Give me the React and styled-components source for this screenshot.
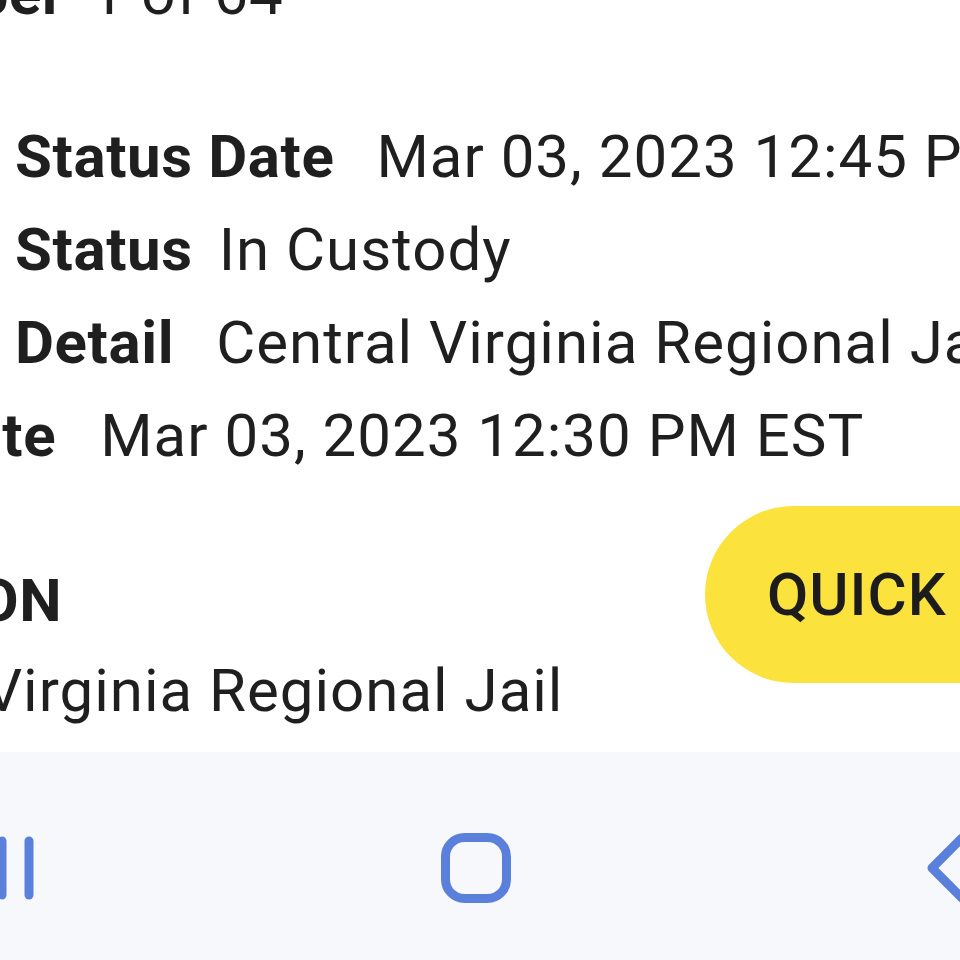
import React from "react";
import styled, { createGlobalStyle } from "styled-components";

const Global = createGlobalStyle`
  html, body { margin: 0; padding: 0; background: #ffffff; overflow: hidden; }
  body { width: 960px; height: 960px; }
  * { box-sizing: border-box; }
`;

const Screen = styled.div`
  width: 960px;
  height: 960px;
  display: flex;
  flex-direction: column;
  overflow: hidden;
  background: #ffffff;
  font-family: Roboto, "Noto Sans", sans-serif;
  color: #1f1f1f;
`;

const Content = styled.main`
  flex: 1;
  display: flex;
  flex-direction: column;
  margin-top: -53px;
  font-size: 60px;
  line-height: 93px;
  letter-spacing: 1px;
  white-space: nowrap;
`;

const Details = styled.section`
  display: flex;
  flex-direction: column;
  margin-top: 70px;
`;

const Row = styled.div`
  display: flex;
  align-items: baseline;
  gap: ${(p) => p.$gap ?? 40}px;
  margin-left: ${(p) => p.$offset ?? 15}px;
`;

const Label = styled.span`
  font-weight: 700;
  letter-spacing: 0.6px;
  flex: none;
`;

const Value = styled.span`
  font-weight: 400;
  flex: none;
`;

const Location = styled.section`
  display: grid;
  grid-template-columns: 705px max-content;
  align-items: start;
  margin-top: 24px;
`;

const LocationText = styled.div`
  display: flex;
  flex-direction: column;
  margin-top: 50px;
  margin-left: -229px;
  line-height: 90px;
`;

const QuickButton = styled.button`
  height: 177px;
  padding: 0 62px;
  border: none;
  border-radius: 88.5px;
  background: #fbe23d;
  color: #1c1c1c;
  font-family: Roboto, "Noto Sans", sans-serif;
  font-size: 60px;
  font-weight: 500;
  letter-spacing: 1px;
  white-space: nowrap;
  text-align: left;
`;

const NavBar = styled.nav`
  flex: none;
  height: 208px;
  padding-top: 24px;
  margin: 0 -10px 0 -30px;
  background: #f7f8fc;
  display: flex;
  align-items: center;
  justify-content: space-between;
`;

const NavIcon = styled.svg`
  display: block;
  flex: none;
  color: #5b80dc;
`;

export default function App() {
  return (
    <>
      <Global />
      <Screen>
        <Content>
          <Row $offset={-155} $gap={26}>
            <Label>Number</Label>
            <Value>1 of 64</Value>
          </Row>
          <Details>
            <Row $gap={42}>
              <Label>Status Date</Label>
              <Value>Mar 03, 2023 12:45 PM EST</Value>
            </Row>
            <Row $gap={26}>
              <Label>Status</Label>
              <Value>In Custody</Value>
            </Row>
            <Row $gap={42}>
              <Label>Detail</Label>
              <Value>Central Virginia Regional Jail</Value>
            </Row>
            <Row $offset={-70} $gap={44}>
              <Label>Date</Label>
              <Value>Mar 03, 2023 12:30 PM EST</Value>
            </Row>
          </Details>
          <Location>
            <LocationText>
              <Label>LOCATION</Label>
              <Value>Central Virginia Regional Jail</Value>
            </LocationText>
            <QuickButton type="button">QUICK VIEW</QuickButton>
          </Location>
        </Content>
        <NavBar>
          <NavIcon width="64" height="70" viewBox="0 0 64 70" aria-label="Recent apps">
            <g stroke="currentColor" strokeWidth="9" strokeLinecap="round">
              <line x1="5" y1="8" x2="5" y2="62" />
              <line x1="32" y1="8" x2="32" y2="62" />
              <line x1="59" y1="8" x2="59" y2="62" />
            </g>
          </NavIcon>
          <NavIcon width="70" height="70" viewBox="0 0 70 70" aria-label="Home">
            <rect x="4.5" y="4.5" width="61" height="61" rx="19" fill="none" stroke="currentColor" strokeWidth="9" />
          </NavIcon>
          <NavIcon width="52" height="70" viewBox="0 0 52 70" aria-label="Back">
            <polyline points="44,5 14,35 44,65" fill="none" stroke="currentColor" strokeWidth="9" strokeLinecap="round" strokeLinejoin="round" />
          </NavIcon>
        </NavBar>
      </Screen>
    </>
  );
}
